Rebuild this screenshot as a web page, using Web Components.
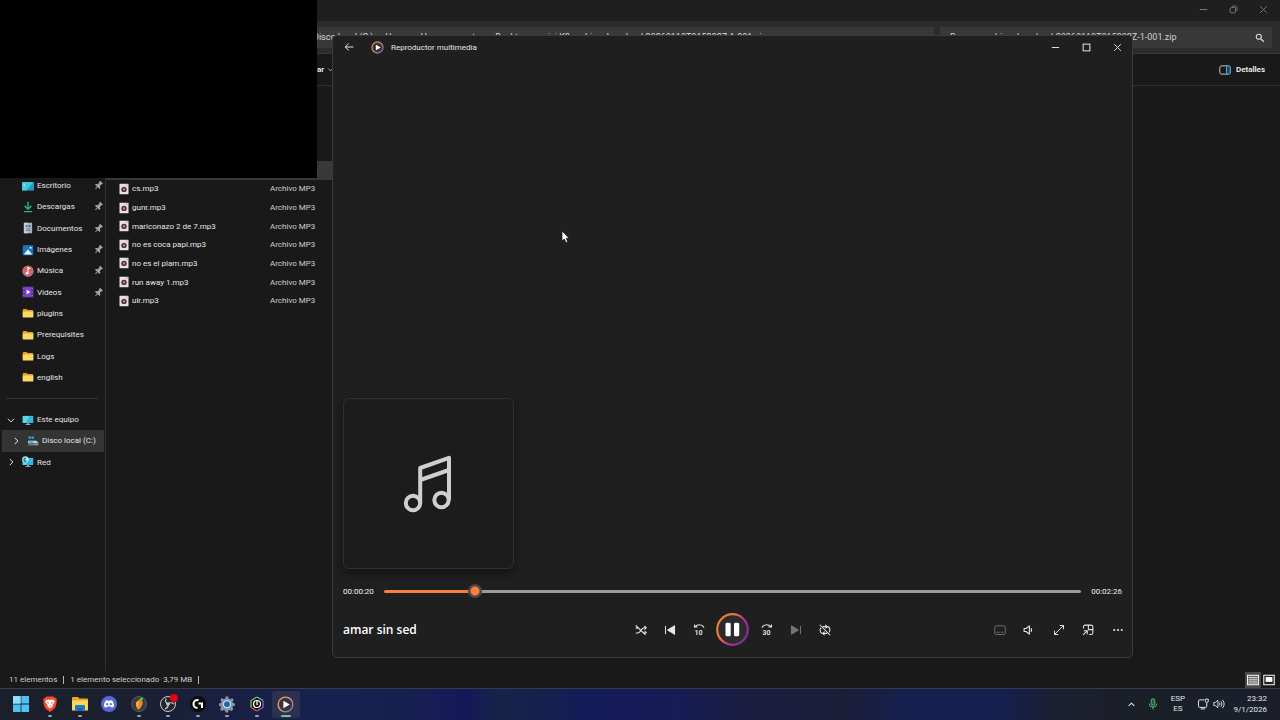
<!DOCTYPE html>
<html lang="es">
<head>
<meta charset="utf-8">
<title>Reproductor multimedia</title>
<style>
html,body{margin:0;height:100%;background:#000;overflow:hidden}
body{font:8px/13px Roboto,"Noto Sans",sans-serif;color:#e6e6e6}
</style>
</head>
<body>
<desktop-screen></desktop-screen>
<script>
const folder = '<path d="M1 4q0-1.500 1.500-1.500h3.500l1.500 1.500h6q1.500 0 1.500 1.500v7H1z" fill="#dda52b"/><path d="M1 6h14v7.500q0 .5-.5.500h-13Q1 14 1 13.500z" fill="#fbd968"/>';
const monitor = '<path d="M1 2.500h14v9.500H1z" fill="#35b8d6"/><path d="M1 2.500h9L5 12H1z" fill="#5fd6e6"/><path d="M7 12h2v1.500h2.500v1h-7v-1H7z" fill="#a9b7be"/>';
const ICONS = {
  desktop: '<rect x="0" y="2.500" width="16" height="11.500" rx="1" fill="#1f9fc8"/><path d="M0 3.500q0-1 1-1h14L6 14H1q-1 0-1-1z" fill="#43c9dc"/><path d="M2 5h2v1H2zM2 7.500h2v1H2z" fill="#fff"/>',
  download: '<path d="M8 1v9.500M3.500 6.500 8 11l4.500-4.500M2.500 14.200h11" fill="none" stroke="#2fae7c" stroke-width="1.900"/>',
  document: '<path d="M2.500 1h11v14h-11z" fill="#a8b3c4"/><path d="M2.500 1h5v14h-5z" fill="#c2cbd9"/><path d="M5 4h2.500v2.500H5zM5 8.500h6v1H5zM5 11h6v1H5zM9 4h2.500v3H9z" fill="#5e6c82"/>',
  image: '<rect x="1" y="1.500" width="14" height="13.500" rx="1" fill="#1978be"/><path d="m2.500 14 5.500-7 5.500 7z" fill="#e8f6ff"/><circle cx="11.500" cy="5" r="1.300" fill="#fff"/>',
  music: '<circle cx="8" cy="8" r="7.500" fill="#cf6262"/><path d="M.5 8A7.500 7.500 0 0 0 15.500 8z" fill="#c46a7b"/><path d="M8 11V3.500l3 1.500" stroke="#fff" stroke-width="1.400" fill="none"/><circle cx="6.700" cy="11" r="1.800" fill="#fff"/>',
  video: '<rect x="1" y="1" width="14" height="14" rx="1" fill="#8240c9"/><path d="M1 1h3v14H1zM12 1h3v14h-3z" fill="#6530a8"/><path d="m6.200 5 5 3-5 3z" fill="#fff"/><path d="M2 3h1v1H2zM2 7.500h1v1H2zM2 12h1v1H2zM13 3h1v1h-1zM13 7.500h1v1h-1zM13 12h1v1h-1z" fill="#d6b8f5"/>',
  folder, monitor,
  drive: '<path d="M2 2h3.300v3H2zM6 2h3.300v3H6z" fill="#2f9fe0"/><path d="M1.500 7.500h11l3 3H1.500z" fill="#cfd5d8"/><path d="M1.500 10.500h14V14h-14z" fill="#6a7478"/><path d="M3 7.500h5v3H3z" fill="#3db5c8"/><path d="M10 12h4v1h-4z" fill="#64e39a"/>',
  network: monitor + '<circle cx="4.500" cy="4.500" r="4.200" fill="#bdeaf5"/><path d="M2 3q2.500-2 4-.5L4 5l2.500 2L4.500 8.500Q1 8 2 3z" fill="#1c89b8"/>',
  pin: '<g transform="rotate(42 8 8)" fill="#a4a4a4"><path d="M4.500 0h7v1.800L10.500 3v4l3 2.300v2h-11v-2l3-2.300V3l-1-1.200z"/><path d="M7.200 11h1.600v5H7.200z"/></g>',
  mp3: '<path d="M2 1h12v14H2z" fill="#e6e2e2"/><path d="m11 1 3 3h-3z" fill="#bdb5b5"/><circle cx="8" cy="8.500" r="3.600" fill="#563040"/><circle cx="8" cy="8.500" r="1.400" fill="#d9838b"/>',
  chevD: '<path d="m3 6 5 5 5-5" fill="none" stroke="currentColor" stroke-width="1.600"/>',
  chevR: '<path d="m6 3 5 5-5 5" fill="none" stroke="currentColor" stroke-width="1.600"/>',
  chevU: '<path d="m3 10.500 5-5 5 5" fill="none" stroke="currentColor" stroke-width="1.800"/>',
  back: '<path d="M15 8H2M7.500 2.500 2 8l5.500 5.500" fill="none" stroke="currentColor" stroke-width="1.600"/>',
  min: '<path d="M1.500 8h13" stroke="currentColor" stroke-width="1.700"/>',
  max: '<rect x="2" y="2" width="12" height="12" fill="none" stroke="currentColor" stroke-width="1.800"/>',
  restore: '<rect x="2" y="4.500" width="9.500" height="9.500" rx="2" fill="none" stroke="currentColor" stroke-width="1.600"/><path d="M5.500 2H11q3 0 3 3v5.500" fill="none" stroke="currentColor" stroke-width="1.600"/>',
  close: '<path d="m2 2 12 12M14 2 2 14" stroke="currentColor" stroke-width="1.600"/>',
  search: '<circle cx="6" cy="6" r="4" fill="none" stroke="currentColor" stroke-width="1.800"/><path d="m9 9 5 5" stroke="currentColor" stroke-width="2.200"/>',
  panel: '<rect x="1" y="2.500" width="14" height="11" rx="2.500" fill="none" stroke="#c8c8c8" stroke-width="1.300"/><path d="M10 2.500h2.500Q15 2.500 15 5v6q0 2.500-2.500 2.500H10z" fill="#174a62" stroke="#4ea9d3" stroke-width="1.300"/>',
  app: '<defs><linearGradient id="a" x1="0" y1="0" x2="1" y2="1"><stop offset="0" stop-color="#f0913c"/><stop offset=".5" stop-color="#d79a9c"/><stop offset="1" stop-color="#7b5fc0"/></linearGradient></defs><circle cx="8" cy="8" r="6.900" fill="#3a333a" stroke="url(#a)" stroke-width="1.300"/><path d="m6 4.500 6 3.500-6 3.500z" fill="#fff"/>',
  note: '<g fill="none" stroke="#cfcfcf" stroke-width="4"><circle cx="9" cy="49" r="7.200"/><circle cx="37.500" cy="46" r="7.200"/><path d="M16.200 49V14L45 3.800V46M16.200 26 45 16" stroke-linejoin="round"/></g>',
  shuffle: '<path d="M1 12h2.500q1.300 0 2.500-1.300l4-4.400Q11.200 5 12.500 5H15M1 2l13 12.500M10.500 10.500q1 1.500 2 1.500H15M12.500 2.500 15 5l-2.500 2.500M13 9.500l2.500 2.500M1 5.500h2.500" fill="none" stroke="currentColor" stroke-width="1.400"/>',
  prev: '<path d="M2 2.500v11" stroke="currentColor" stroke-width="1.300"/><path d="M14 2.500v11L5 8z" fill="currentColor" stroke="currentColor" stroke-width="1.500" stroke-linejoin="round"/>',
  next: '<path d="M14 2.500v11" stroke="currentColor" stroke-width="1.300"/><path d="M2 2.500v11L11 8z" fill="currentColor" stroke="currentColor" stroke-width="1.500" stroke-linejoin="round"/>',
  back10: '<path d="M2 .5V4h4M2 4Q8-1.500 13.500 3l1.200 2" fill="none" stroke="currentColor" stroke-width="1.400"/>',
  fwd30: '<path d="M14 .5V4h-4M14 4Q8-1.500 2.500 3L1.300 5" fill="none" stroke="currentColor" stroke-width="1.400"/>',
  pause: '<defs><linearGradient id="p" x1="0" y1=".2" x2="1" y2=".8"><stop offset="0" stop-color="#f0812c"/><stop offset=".35" stop-color="#e9743f"/><stop offset=".62" stop-color="#bd2a92"/><stop offset="1" stop-color="#68349a"/></linearGradient></defs><circle cx="16.500" cy="16.500" r="15.300" fill="#2b2b2d" stroke="url(#p)" stroke-width="2.200"/><rect x="9.500" y="9.800" width="5.200" height="13.500" rx="1.400" fill="#fff"/><rect x="18" y="9.800" width="5.200" height="13.500" rx="1.400" fill="#fff"/>',
  repeat: '<path d="M5 3.500h5.500Q14.500 3.500 14.500 8q0 1.500-1 3M11 12.500H5.500Q1.500 12.500 1.500 8q0-1.500 1-3M8.500 1l2.500 2.500L8.500 6M7.500 10 5 12.500 7.500 15M1 1l14 14" fill="none" stroke="currentColor" stroke-width="1.400"/>',
  cc: '<rect x="1" y="2.500" width="14" height="11.500" rx="2" fill="none" stroke="currentColor" stroke-width="1.200"/><path d="M3.500 11h4M9 11h3.500" stroke="currentColor" stroke-width="1.200"/>',
  vol: '<path d="M1.500 6H4l4.500-3.500v11L4 10H1.500z" fill="none" stroke="currentColor" stroke-width="1.500" stroke-linejoin="round"/><path d="M10.500 5.500q2 2.500 0 5" fill="none" stroke="currentColor" stroke-width="1.500"/>',
  full: '<path d="M2 14 14 2M9 2h5v5M2 9v5h5" fill="none" stroke="currentColor" stroke-width="1.300"/>',
  mini: '<path d="M2 6V4q0-2.500 2.500-2.500h7.500Q14.500 1.500 14.500 4v7.500q0 2.500-2.500 2.500H9.500M8.500 2v5.500h6M1.500 14.500 7 9M2.500 9H7v4.500" fill="none" stroke="currentColor" stroke-width="1.400"/>',
  more: '<g fill="currentColor"><circle cx="3" cy="8" r="1.400"/><circle cx="8" cy="8" r="1.400"/><circle cx="13" cy="8" r="1.400"/></g>',
  list: '<rect x=".7" y="1.700" width="14.600" height="12.600" fill="#555" stroke="#f0f0f0" stroke-width="1.400"/><path d="M2 4.500h12M2 7h12M2 9.500h12M2 12h12" stroke="#f0f0f0" stroke-width="1.200"/>',
  tiles: '<rect x="1" y="1.700" width="14" height="12.600" fill="#222" stroke="#eee" stroke-width="1.400"/><path d="M3.500 4h9v6.500h-9z" fill="#fff"/>',
  win: '<path d="M0 0h7.600v7.600H0zM8.400 0H16v7.600H8.400zM0 8.400h7.600V16H0zM8.400 8.400H16V16H8.400z" fill="#4ec3f3"/><path d="M0 0h7.600v7.600H0z" fill="#8ee0fa"/>',
  brave: '<path d="M4.500.5h7l1.200 1.300 1.500.2.600 2-.5 4.500q-.5 3.500-3.300 5.300L8 16l-3-2.200Q2.200 12 1.700 8.500L1.200 4l.6-2 1.500-.2z" fill="#f04a2a"/><path d="m4 4 2.500-.5L8 4l1.500-.5L12 4l.8 2-2.300 3 .3 1.300L8 12.500l-2.800-2.200.3-1.300-2.300-3z" fill="#fff"/><path d="m4.500 6 2.300.7-.3 1.600zM11.500 6l-2.300.7.3 1.600zM7 10l1-.5 1 .5-1 1z" fill="#f04a2a"/>',
  explorer: '<path d="M0 2q0-1 1-1h5l1.500 1.500H15q1 0 1 1V14H0z" fill="#e8a922"/><path d="M0 4.500h16V14q0 .5-.5.500H.5Q0 14.500 0 14z" fill="#fbd55e"/><path d="M4 9h8q1 0 1 1v4.500H3V10q0-1 1-1z" fill="#1680c8"/><path d="M5.500 12h5v2.500h-5z" fill="#0f67ab"/>',
  discord: '<circle cx="8" cy="8" r="8" fill="#5865d9"/><path d="M4.500 4.800 6.500 4l.5.800h2l.5-.8 2 .8q1.700 2.700 1.500 5.700l-2.300 1.300-.8-1.200H6.100l-.8 1.200L3 10.500q-.2-3 1.500-5.700z" fill="#fff"/><circle cx="6.200" cy="8.200" r="1.100" fill="#5865d9"/><circle cx="9.800" cy="8.200" r="1.100" fill="#5865d9"/>',
  fl: '<circle cx="8" cy="8" r="7.500" fill="#383c40" stroke="#555b60"/><path d="M8.500 4Q12.500 4 11.500 8 10 12 7.500 14 4.500 11 5 6.500 6.200 4 8.500 4z" fill="#f38a1d"/><path d="M8 5q-2 4-1 7.500Q4.500 9 5.500 6.500z" fill="#ffc04b"/><path d="M8 4.500Q8.500 1 12 1.500 12.300 4.500 9.500 5.500z" fill="#68b93c"/>',
  obs: '<circle cx="8" cy="8" r="7.500" fill="#24262b" stroke="#c8cacd"/><g fill="none" stroke="#c8cacd" stroke-width="1.200"><path d="M8 8Q4.500 6.500 6 2.500M8 8q3-2.500 6 0M8 8q.7 3.500-3 5"/></g><circle cx="8" cy="8" r="1.800" fill="#c8cacd"/><circle cx="14" cy="2" r="4" fill="#e80010"/>',
  ghub: '<circle cx="8" cy="8" r="8" fill="#0a0a0c"/><path d="M8.500 4H7.500a4 4 0 0 0 0 8" fill="none" stroke="#fff" stroke-width="2"/><path d="M8.500 7.500H12V12" fill="none" stroke="#fff" stroke-width="2"/>',
  gear: '<path d="m6.800.5h2.400l.5 2 1.500.7 2-1.200 1.500 2-1.200 1.800.5 1.200 2 .5v2l-2 .7-.6 1.300 1 1.800-1.800 1.700-1.800-1-1.300.6-.6 1.900H6.600L6 14.600 4.700 14l-1.900 1L1 13.300l1-1.800-.6-1.300-1.400-.7v-2l1.900-.5.500-1.300L1.300 4 3 2l1.900 1.200 1.300-.7z" fill="#8795a3"/><circle cx="8" cy="8.200" r="4" fill="#d6e4ed"/><circle cx="8" cy="8.200" r="2.900" fill="#1769ae"/>',
  hex: '<path d="M8 0 15 4v8l-7 4-7-4V4z" fill="#111217"/><path d="m8 1 6 3.500" stroke="#58ccd5" stroke-width="1.300"/><path d="M14 4.500v7L8 15" fill="none" stroke="#b25ad4" stroke-width="1.300"/><path d="m8 15-6-3.500" stroke="#e95050" stroke-width="1.300"/><path d="M2 11.500v-7L8 1" fill="none" stroke="#79c75a" stroke-width="1.300"/><circle cx="8" cy="8" r="3.500" fill="none" stroke="#fff" stroke-width="1.200"/><path d="M8 5v4" stroke="#fff" stroke-width="1.300"/>',
  mic: '<rect x="5.500" y="1" width="5" height="8.500" rx="2.500" fill="#285940" stroke="#57c47c" stroke-width="1.200"/><path d="M3 7.500q0 4.500 5 4.500t5-4.500M8 12v3" fill="none" stroke="#57c47c" stroke-width="1.300"/>',
  lan: '<path d="M9.500 2.500h-6Q2 2.500 2 4v7q0 1.500 1.500 1.500h8Q13 12.500 13 11V8.500M5 14.500h6" fill="none" stroke="currentColor" stroke-width="1.300"/><path d="M11 1.500h4V5q-2 2-4 0zM13 6v3" fill="none" stroke="currentColor" stroke-width="1.300"/>',
  speaker: '<path d="M1 6h2l3.500-3v10L3 10H1z" fill="none" stroke="currentColor" stroke-width="1.200"/><path d="M8.500 6q1.500 2 0 4M10.500 4.200q3 3.800 0 7.600M12.700 2.500q4.300 5.500 0 11" fill="none" stroke="currentColor" stroke-width="1.200"/>'
};
const BOX = {note:'0 0 50 60', pause:'0 0 33 33'};

const RESET = `*{box-sizing:border-box}
button{font:inherit;color:inherit;background:none;border:0;padding:0;margin:0;display:flex;align-items:center;justify-content:center}
a{color:inherit;text-decoration:none}`;

function define(name, css, html){
  customElements.define(name, class extends HTMLElement{
    connectedCallback(){
      if(this.shadowRoot) return;
      const t = document.createElement('template');
      t.innerHTML = '<style>' + RESET + css + '</style>' + (typeof html === 'function' ? html(this) : html);
      this.attachShadow({mode:'open'}).append(t.content.cloneNode(true));
    }
  });
}
const icon = (n, s) => `<ui-icon name="${n}"${s ? ` style="--s:${s}px"` : ''}></ui-icon>`;

define('ui-icon', ':host{display:block;flex:none;width:var(--s,12px);height:var(--s,12px)}svg{display:block;width:100%;height:100%;overflow:visible}',
  h => { const n = h.getAttribute('name'); return `<svg viewBox="${BOX[n] || '0 0 16 16'}" aria-hidden="true">${ICONS[n]}</svg>`; });

/* One row of the navigation tree */
define('nav-item', `
:host{display:flex;flex:1;min-height:0}
a{flex:1;display:flex;align-items:center;margin:0 1px 0 2px;padding:0 1px 0 4px;white-space:nowrap}
:host([selected]) a{background:#343434}
:host([nested]) a{padding-left:9px}
.tw{width:10px;margin-right:6px}
.label{margin-left:3px;flex:1}
`, h => `<a href="#"><span class="tw">${h.hasAttribute('open') ? icon('chevD',10) : h.hasAttribute('closed') ? icon('chevR',10) : ''}</span>${icon(h.getAttribute('icon'))}<span class="label"><slot></slot></span>${h.hasAttribute('pinned') ? icon('pin',9) : ''}</a>`);

define('nav-tree', `
:host{display:block;width:106px;border-right:1px solid #303030;padding-top:89px}
nav,.pins,.drives{display:flex;flex-direction:column}
.pins{height:213px}
.drives{height:64px}
hr{border:0;height:1px;background:#333;margin:10px 7px 10px 6px}
`, `<nav aria-label="Navegación"><div class="pins">
<nav-item icon="desktop" pinned>Escritorio</nav-item><nav-item icon="download" pinned>Descargas</nav-item>
<nav-item icon="document" pinned>Documentos</nav-item><nav-item icon="image" pinned>Imágenes</nav-item>
<nav-item icon="music" pinned>Música</nav-item><nav-item icon="video" pinned>Vídeos</nav-item>
<nav-item icon="folder">plugins</nav-item><nav-item icon="folder">Prerequisites</nav-item>
<nav-item icon="folder">Logs</nav-item><nav-item icon="folder">english</nav-item></div><hr>
<div class="drives"><nav-item icon="monitor" open>Este equipo</nav-item>
<nav-item icon="drive" nested closed selected>Disco local (C:)</nav-item><nav-item icon="network" closed>Red</nav-item></div></nav>`);

define('file-list', `
:host{display:block;flex:1;padding-top:75px}
table{width:226px;height:149px;border-collapse:collapse;table-layout:fixed}
td{padding:0;height:18px;white-space:nowrap}
td:first-child{width:164px;padding-left:12px}
td:last-child{color:#cfcfcf}
.n{display:flex;align-items:center;gap:2px}
tr.sel{background:#383838}
`, () => `<table><tbody><tr class="sel"><td></td><td></td></tr>${['cs.mp3','gunr.mp3','mariconazo 2 de 7.mp3','no es coca papi.mp3','no es el plam.mp3','run away 1.mp3','uir.mp3'].map(n => `<tr><td><div class="n">${icon('mp3')}${n}</div></td><td>Archivo MP3</td></tr>`).join('')}</tbody></table>`);

define('explorer-window', `
:host{display:flex;flex-direction:column;min-height:0;background:#191919}
.title{height:21px;background:#1f1f1f;display:flex;justify-content:flex-end;align-items:flex-start;color:#7d7d7d;padding-right:2px}
.title button{width:30px;height:19px}
.bar{height:33px;background:#2c2c2c;border-bottom:1px solid #383838;padding:6px 8px 5px 0;display:flex;gap:6px;font-size:9px}
.addr,.search{height:21px;background:#383838;display:flex;align-items:center;white-space:nowrap;color:#dcdcdc}
.addr{flex:1;min-width:0;padding-left:313px;gap:12px}
.search{width:332px;padding:0 7px 0 10px;justify-content:space-between}
input{font:inherit;color:#d0d0d0;background:none;border:0;padding:0;flex:1;min-width:0}
input::placeholder{color:#d0d0d0}
.tools{height:32px;border-bottom:1px solid #303030;display:flex;align-items:center;justify-content:space-between;padding:0 15px 0 317px;font-weight:600;color:#f0f0f0}
.tools button{gap:5px}
.tools button:first-child{gap:3px}
.body{flex:1;min-height:0;display:flex}
.status{height:17px;display:flex;align-items:center;padding:0 3px 0 9px;color:#cfcfcf;gap:6px}
.sep{width:1px;height:8px;background:#b8b8b8}
.views{margin-left:auto;display:flex}
.views button{width:16px;height:16px}
.views button:first-child{background:#484848}
`, `<div class="title"><button aria-label="Minimizar">${icon('min',9)}</button><button aria-label="Restaurar">${icon('restore',9)}</button><button aria-label="Cerrar">${icon('close',9)}</button></div>
<div class="bar"><div class="addr"><span>Disco local (C:)</span><span>Users</span><span>Homecomputer</span><span>Desktop</span><span>misi K8</span><span>drive-download-20260118T015202Z-1-001.zip</span></div>
<div class="search"><input type="search" aria-label="Buscar" placeholder="Buscar en drive-download-20260118T015202Z-1-001.zip">${icon('search',10)}</div></div>
<div class="tools"><button>ar ${icon('chevD',7)}</button><button>${icon('panel')}Detalles</button></div>
<div class="body"><nav-tree></nav-tree><file-list></file-list></div>
<div class="status"><span>11 elementos</span><i class="sep"></i><span>1 elemento seleccionado&nbsp; 3,79 MB</span><i class="sep"></i><div class="views"><button aria-label="Detalles">${icon('list')}</button><button aria-label="Iconos grandes">${icon('tiles')}</button></div></div>`);

define('player-button', `
:host{display:block;color:#e6e6e6}
:host([off]){color:#747474}
button{width:29px;height:29px;position:relative}
:host([main]) button{width:33px;height:33px;margin:0 3px}
.n{position:absolute;left:0;right:0;top:14px;text-align:center;font-size:7px;line-height:8px;font-weight:600}
`, h => `<button aria-label="${h.getAttribute('label')}">${icon(h.getAttribute('icon'), h.hasAttribute('main') ? 33 : 12)}${h.hasAttribute('num') ? `<span class="n">${h.getAttribute('num')}</span>` : ''}</button>`);

define('media-player', `
:host{display:flex;flex-direction:column;background:#1f1f1f;border:1px solid #3b3b3b;border-radius:5px;overflow:hidden}
header{height:22px;display:flex;align-items:center;padding-left:1px}
header button{width:30px;height:20px}
header .app{margin:0 7px 0 7px}
header .w{margin-left:auto;display:flex;gap:1px}
.stage{flex:1;min-height:0;display:flex;align-items:flex-end;padding-left:10px}
.art{width:171px;height:171px;border:1px solid #303030;border-radius:6px;background:#1c1c1c;box-shadow:0 4px 8px #0006;display:flex;align-items:center;justify-content:center}
.time{height:22px;margin-top:11px;padding:0 10px;display:flex;align-items:center;gap:10px;color:#f0f0f0}
input{-webkit-appearance:none;appearance:none;flex:1;min-width:0;height:14px;margin:0;background:none}
input::-webkit-slider-runnable-track{height:3px;border-radius:2px;background:linear-gradient(90deg,#f0813f 13%,#9c9a9a 13%)}
input::-webkit-slider-thumb{-webkit-appearance:none;width:14px;height:14px;margin-top:-6px;border-radius:50%;background:radial-gradient(circle,#f5813f 4px,#4a4745 5px)}
.ctl{height:55px;display:grid;grid-template-columns:1fr auto 1fr;align-items:center}
h1{margin:0;padding-left:10px;font:600 12px/16px "Open Sans","Noto Sans",sans-serif;color:#fff}
.mid{display:flex;align-items:center}
.end{justify-self:end;width:147px;display:flex;justify-content:space-between}
`, `<header><button aria-label="Atrás">${icon('back',10)}</button><span class="app">${icon('app',13)}</span><span>Reproductor multimedia</span><div class="w"><button aria-label="Minimizar">${icon('min',9)}</button><button aria-label="Maximizar">${icon('max',9)}</button><button aria-label="Cerrar">${icon('close',9)}</button></div></header>
<div class="stage"><div class="art">${icon('note',60)}</div></div>
<div class="time"><span>00:00:20</span><input type="range" aria-label="Posición" min="0" max="1000" value="123"><span>00:02:26</span></div>
<div class="ctl"><h1>amar sin sed</h1><div class="mid">
<player-button icon="shuffle" label="Aleatorio"></player-button><player-button icon="prev" label="Anterior"></player-button><player-button icon="back10" num="10" label="Retroceder"></player-button><player-button main icon="pause" label="Pausar"></player-button><player-button icon="fwd30" num="30" label="Avanzar"></player-button><player-button off icon="next" label="Siguiente"></player-button><player-button icon="repeat" label="Repetir"></player-button></div>
<div class="end"><player-button off icon="cc" label="Subtítulos"></player-button><player-button icon="vol" label="Volumen"></player-button><player-button icon="full" label="Pantalla completa"></player-button><player-button icon="mini" label="Minirreproductor"></player-button><player-button icon="more" label="Más"></player-button></div></div>`);

define('task-button', `
:host{display:block}
button{width:28px;height:27px;position:relative;border-radius:3px}
:host([active]) button{background:#2c3150}
:host([running]) button::after{content:"";position:absolute;left:12px;bottom:1px;width:4px;height:2px;border-radius:1px;background:#9aa0ac}
:host([active]) button::after{left:9px;width:10px;background:#6ccb7b}
`, h => `<button aria-label="${h.getAttribute('label')}">${icon(h.getAttribute('icon'), h.hasAttribute('active') ? 17 : 16)}</button>`);

define('task-bar', `
:host{display:flex;align-items:center;justify-content:space-between;height:32px;box-sizing:border-box;border-top:1px solid #353a4c;padding:0 13px 1px 7px;
background:linear-gradient(90deg,#1b1f2b 0,#1b2030 10%,#191f42 18%,#16224f 25%,#15204f 32%,#171a58 35%,#151858 36.500%,#152448 39%,#14204e 43%,#131b59 46%,#161c55 53%,#1b1d40 58%,#1b1d38 66%,#14204f 71%,#13204f 78%,#1c1f2e 83%,#1b1f27 90%,#1a1f2a 100%)}
.apps{display:flex;justify-content:space-between;width:293px}
.tray{display:flex;align-items:center;color:#e6e6e6}
.lang{text-align:center;line-height:10px;margin:0 12px}
.clock{text-align:right;line-height:11px;width:42px;white-space:nowrap}
.up{margin-right:11px}.net{margin-right:4px}
`, `<div class="apps"><task-button icon="win" label="Inicio"></task-button><task-button running icon="brave" label="Brave"></task-button><task-button running icon="explorer" label="Explorador"></task-button><task-button icon="discord" label="Discord"></task-button><task-button running icon="fl" label="FL Studio"></task-button><task-button running icon="obs" label="OBS"></task-button><task-button running icon="ghub" label="G HUB"></task-button><task-button running icon="gear" label="Configuración"></task-button><task-button running icon="hex" label="Iluminación"></task-button><task-button running active icon="app" label="Reproductor multimedia"></task-button></div>
<div class="tray"><button class="up" aria-label="Iconos ocultos">${icon('chevU',9)}</button>${icon('mic')}<span class="lang">ESP<br>ES</span><span class="net">${icon('lan')}</span>${icon('speaker')}<span class="clock">23:32<br>9/1/2026</span></div>`);

define('desktop-screen', `
:host{display:grid;grid-template-rows:1fr auto;height:100vh;position:relative}
media-player{position:absolute;left:332px;top:35px;right:147px;bottom:62px}
.cover{position:absolute;left:0;top:0;width:317px;height:178px;background:#000}
`, '<explorer-window></explorer-window><task-bar></task-bar><media-player></media-player><div class="cover"></div>');

/* Pointer arrow resting over the player */
define('mouse-pointer', ':host{position:absolute;left:561px;top:230px;width:9px;height:14px;pointer-events:none}svg{display:block}',
  '<svg width="9" height="14" viewBox="0 0 9 14" aria-hidden="true"><path d="M1 1v10l2.300-2L5 12.700l1.700-.8L5.200 8.300H8.200z" fill="#fff" stroke="#111" stroke-width=".7"/></svg>');
document.querySelector('desktop-screen').shadowRoot.append(document.createElement('mouse-pointer'));
</script>
</body>
</html>
